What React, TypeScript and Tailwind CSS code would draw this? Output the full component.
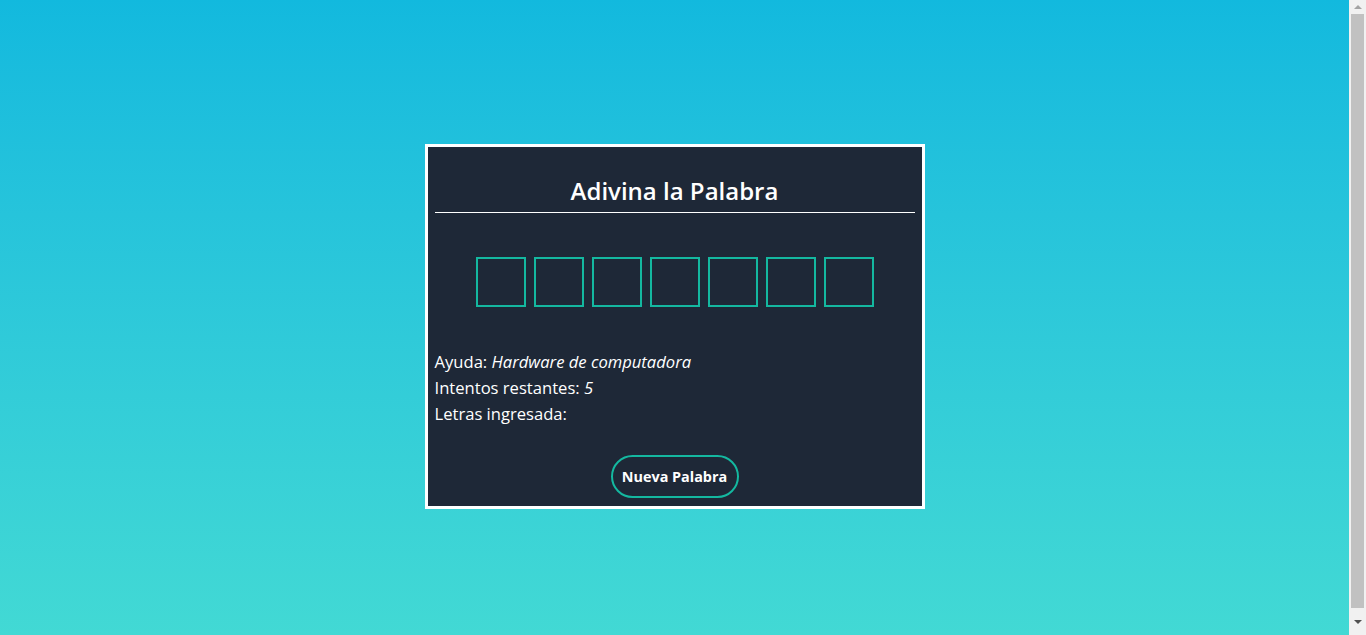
const SLOTS = 7;

// Classic window scrollbar seen at the right edge of the capture.
const Scrollbar = () => (
  <div className="flex h-[635px] w-[17px] shrink-0 flex-col items-center bg-[#f1f1f1]">
    <div className="flex h-[14px] items-center justify-center">
      <div className="h-0 w-0 border-x-4 border-b-4 border-x-transparent border-b-[#a3a3a3]" />
    </div>
    <div className="w-[13px] flex-1 bg-[#c1c1c1]" />
    <div className="flex h-[27px] items-center justify-center">
      <div className="h-0 w-0 border-x-4 border-t-4 border-x-transparent border-t-[#505050]" />
    </div>
  </div>
);

const App = () => {
  return (
    <div className="flex h-[635px] overflow-hidden font-['Open_Sans',sans-serif]">
      <main className="flex flex-1 justify-center bg-gradient-to-b from-[#12b9de] to-[#42d9d4] pt-[144px]">
        <div className="h-fit w-[500px] border-[3px] border-white bg-[#1e2837] px-[7px] py-2 text-white">
          <h1 className="mt-[18px] border-b border-white pb-[3px] text-center text-2xl leading-9 font-semibold">
            Adivina la Palabra
          </h1>

          <div className="mt-[44px] flex justify-center gap-2">
            {Array.from({ length: SLOTS }).map((_, i) => (
              <div
                key={i}
                className="h-[50px] w-[50px] border-2 border-[#14b8a0]"
              />
            ))}
          </div>

          <div className="mt-[42px] text-[16.6px] leading-[26px]">
            <p>
              Ayuda: <em>Hardware de computadora</em>
            </p>
            <p>
              Intentos restantes: <em>5</em>
            </p>
            <p>Letras ingresada:</p>
          </div>

          <div className="mt-[28px] flex justify-center">
            <button
              type="button"
              className="h-[43px] w-[128px] rounded-full border-2 border-[#14b8a0] text-[14.4px] font-bold"
            >
              Nueva Palabra
            </button>
          </div>
        </div>
      </main>
      <Scrollbar />
    </div>
  );
};

export default App;
